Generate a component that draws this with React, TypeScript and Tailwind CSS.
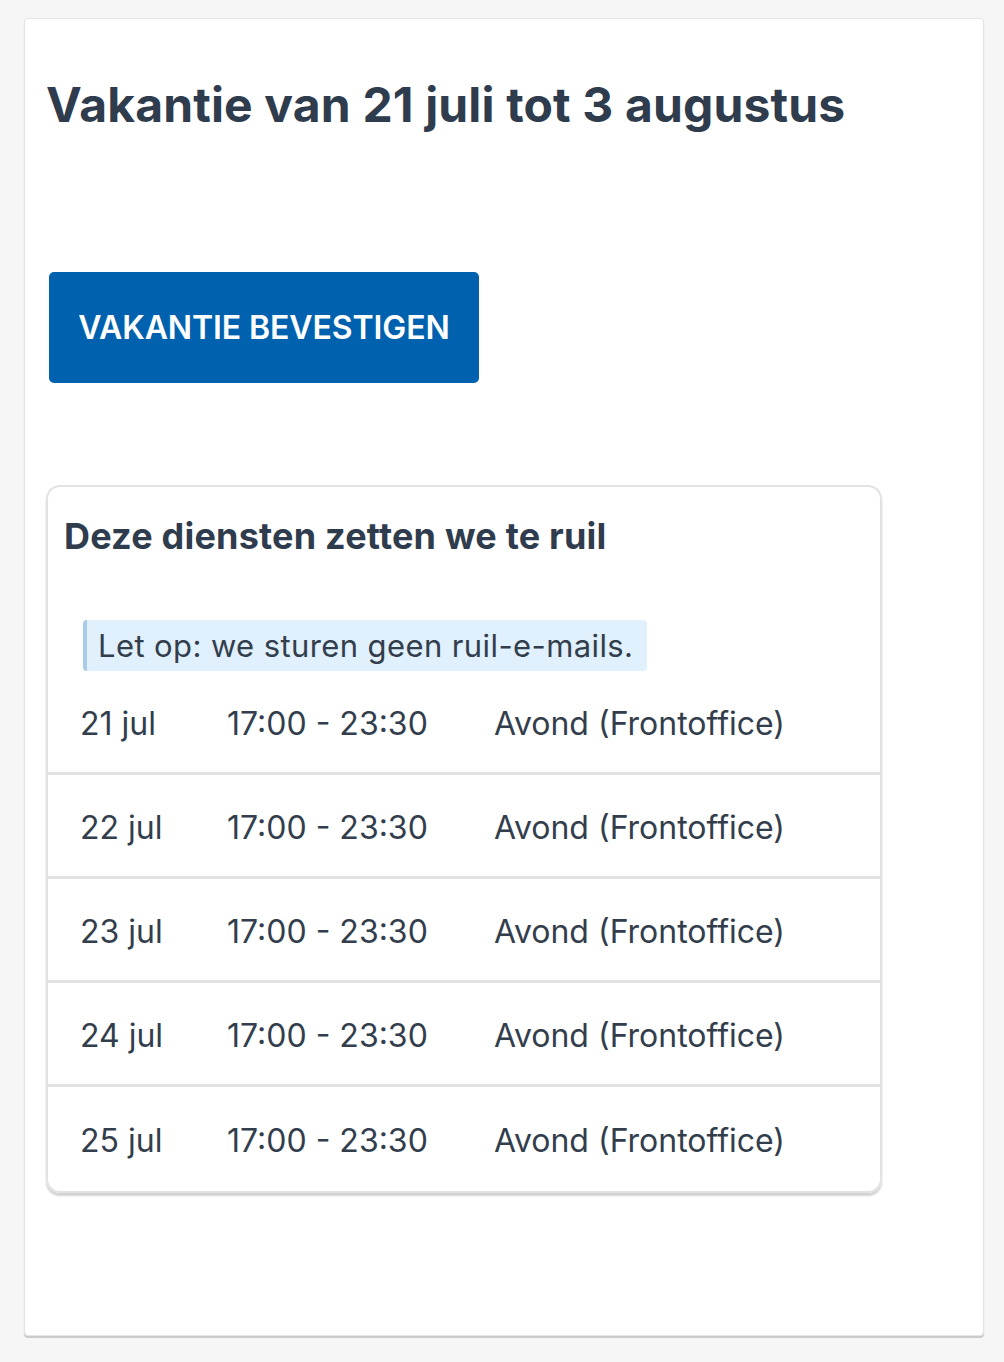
import React from "react";

const rows = [
  { d: "21 jul", t: "17:00 - 23:30", s: "Avond (Frontoffice)" },
  { d: "22 jul", t: "17:00 - 23:30", s: "Avond (Frontoffice)" },
  { d: "23 jul", t: "17:00 - 23:30", s: "Avond (Frontoffice)" },
  { d: "24 jul", t: "17:00 - 23:30", s: "Avond (Frontoffice)" },
  { d: "25 jul", t: "17:00 - 23:30", s: "Avond (Frontoffice)" },
];

export default function App() {
  return (
    <div
      className="min-h-[1362px] w-full bg-[#f6f6f6] pt-[18px] pl-[24px]"
      style={{ fontFamily: "Inter, 'Noto Sans', sans-serif" }}
    >
      <div className="w-[960px] h-[1318px] bg-white border border-[#e4e4e4] rounded-[4px] shadow-[0_2px_1px_rgba(0,0,0,0.18)] pl-[21px] pt-[58px]">
        <h1 className="text-[48px] leading-[56px] font-bold text-[#2f3c4d] tracking-[0.15px]">
          Vakantie van 21 juli tot 3 augustus
        </h1>
        <div className="mt-[139px] ml-[3px]">
          <button className="w-[430px] h-[111px] bg-[#0062ae] rounded-[5px] text-white text-[32px] font-semibold tracking-[-0.1px] flex items-center justify-center">
            VAKANTIE BEVESTIGEN
          </button>
        </div>
        <div className="mt-[102px] w-[836px] border-2 border-[#e2e2e2] rounded-[14px] shadow-[0_3px_2px_rgba(0,0,0,0.18)] overflow-hidden">
          <h2 className="pt-[27px] pl-[16px] text-[36px] leading-[44px] font-bold text-[#2f3c4d] tracking-[0.2px]">
            Deze diensten zetten we te ruil
          </h2>
          <div className="mt-[62px] ml-[35px] w-fit bg-[#e0f0fc] border-l-4 border-[#a9cbe8] rounded-[4px] pl-[11px] pr-[14px] text-[31px] leading-[51px] text-[#333e4d] tracking-[0.4px]">
            Let op: we sturen geen ruil-e-mails.
          </div>
          <div>
            {rows.map((r, i) => (
              <div
                key={i}
                className={
                  "flex items-center h-[104px] pl-[32px] pt-[4px] text-[32px] text-[#333e4d] " +
                  (i < rows.length - 1 ? "border-b-[3px] border-[#e2e2e2]" : "")
                }
              >
                <div className="w-[147px]">{r.d}</div>
                <div className="w-[267px]">{r.t}</div>
                <div>{r.s}</div>
              </div>
            ))}
          </div>
        </div>
      </div>
    </div>
  );
}
